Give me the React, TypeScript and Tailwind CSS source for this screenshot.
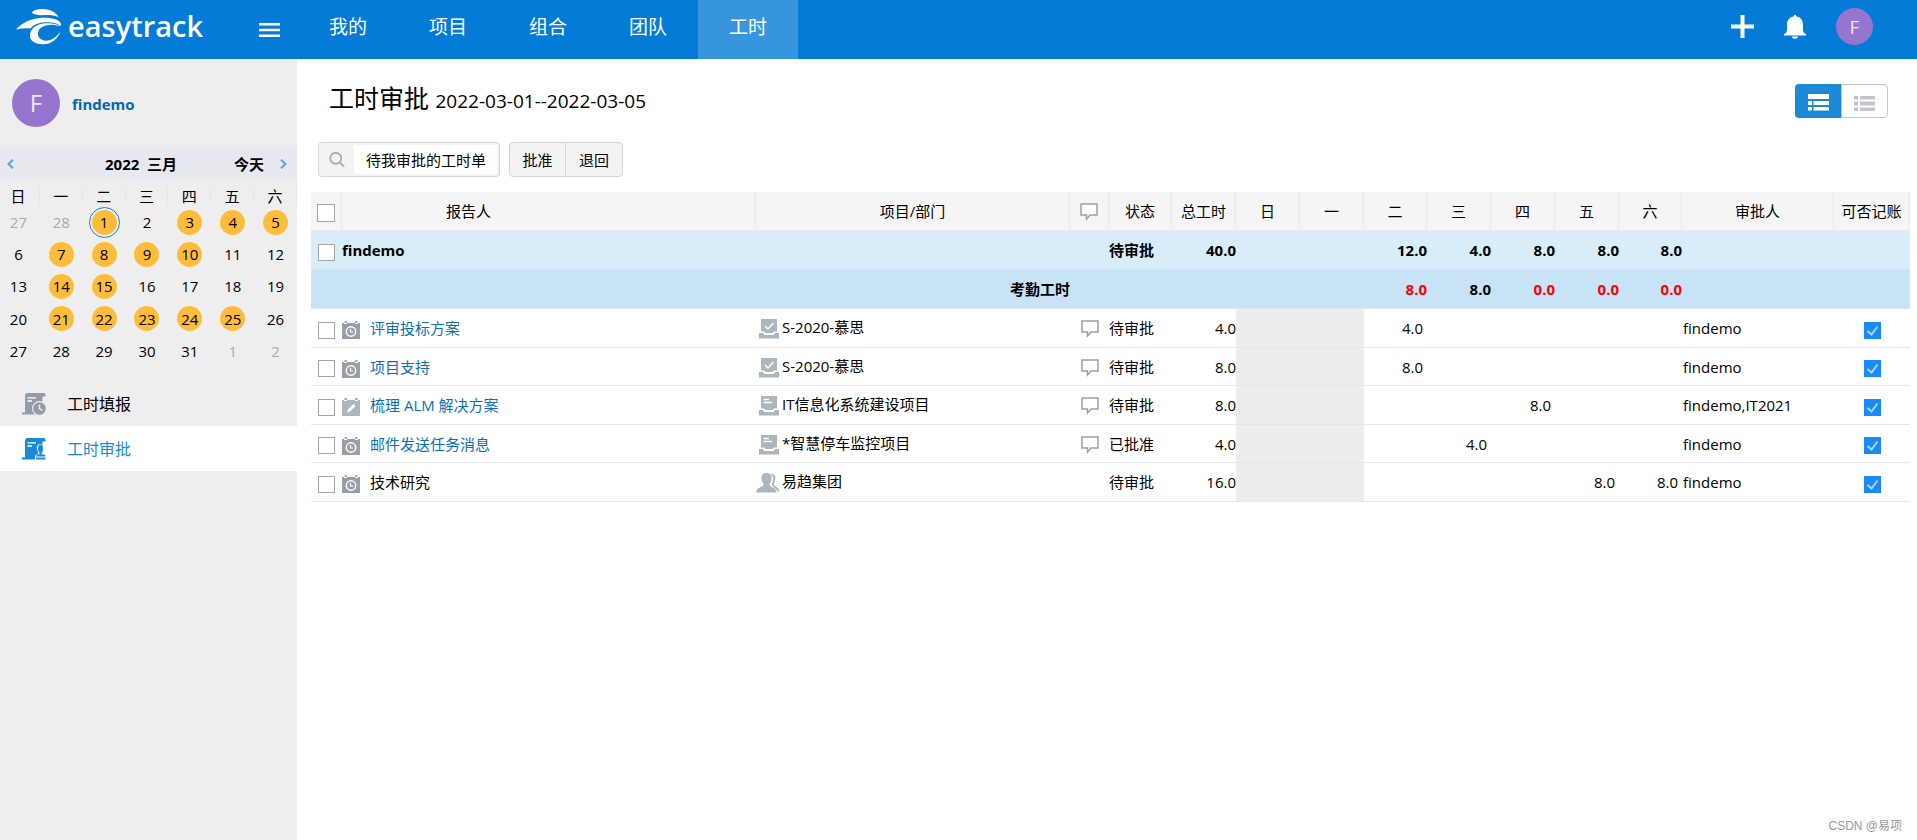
import React, { useState } from 'react';
import clsx from 'clsx';

type IconProps = { className?: string };

const Logo: React.FC = () => (
  <svg width="46" height="37" viewBox="0 0 46 37" fill="#fff" aria-hidden="true">
    <path d="M15.500 4.500 C19 1.500 22 .8 27 1 C34 1.200 40 4 42.500 9.200 C37 6.500 31 7 25 7.200 C21 7.200 18 6.500 15.500 4.500Z" />
    <path d="M0 21.500 C6 15 15 10.300 26 9.800 C36 9.400 44 11.500 45 16 C45.300 17.500 44.500 18 43.500 17.500 C41 15 35 14 29 14.300 C23 14.500 17 17 14.500 20.500 C10 20 5 20.300 0 21.500Z" />
    <path d="M43.500 18.500 C38 15.500 28 16.500 24 20.500 C20 25 22 31 28 32.500 C35 33.500 41 29 44.500 23 C42 31.500 35 36.500 26.500 36.300 C18 36 13 32 14 26.500 C15 20 21 15.500 30 15.300 C36 15 42 16 43.500 18.500Z" />
  </svg>
);

const TimesheetIcon: React.FC<IconProps & { stamp?: boolean }> = ({ className, stamp }) => (
  <svg width="24" height="22" viewBox="0 0 24 22" className={className} aria-hidden="true">
    <path d="M6 0H21.500C23.500 0 23.700 1.500 23.500 3.500H20.500V19H16V21.500H0V19.500H3V3C3 1 4 0 6 0Z" fill="currentColor" />
    <path d="M5.500 4.800H14M5.500 8H10" stroke="#fff" strokeWidth="1.300" />
    {stamp ? (
      <>
        <path d="M13 22V17.500L16.500 15.500L14.800 10C14.500 4.500 22 4.500 21.500 10L20 15.500L24 17.500V22Z" fill="#fff" />
        <ellipse cx="18.500" cy="10.500" rx="2.500" ry="4" fill="currentColor" />
        <path d="M17.300 13H19.700V16.500H17.300ZM14 18.500C14 17 15 16.500 16.500 16.500H21C22.500 16.500 23.500 17 23.500 18.500ZM14 19.500H23.500V21.500H14Z" fill="currentColor" />
      </>
    ) : (
      <>
        <circle cx="17.500" cy="15.500" r="7.500" fill="#eee" />
        <circle cx="17.500" cy="15.500" r="6.300" fill="currentColor" />
        <path d="M17.500 11.500V15.500L20.500 17.500" stroke="#eee" strokeWidth="1.500" fill="none" />
      </>
    )}
  </svg>
);

const TaskIcon: React.FC<{ kind: string }> = ({ kind }) => (
  <svg width="18" height="18" viewBox="0 0 18 18" className="shrink-0" aria-hidden="true">
    <path d="M0 2H2V3H5V2H13V3H16V2H18V18H0Z" fill={kind === 'edit' ? '#adb5bf' : '#989fab'} />
    <path d="M2.500 0H5V2H2.500ZM13 0H15.500V2H13Z" fill="#a5acb7" />
    {kind === 'edit' ? (
      <path d="M5 14.500L6 11.500L11.500 6L13.500 8L8 13.500Z" fill="#fff" />
    ) : (
      <>
        <circle cx="9" cy="10.500" r="4.700" fill="none" stroke="#fff" strokeWidth="1.500" />
        <path d="M8.500 8V11H11" stroke="#fff" strokeWidth="1.200" fill="none" />
      </>
    )}
  </svg>
);

const ProjectIcon: React.FC<{ kind: string }> = ({ kind }) => {
  if (kind === 'group') {
    return (
      <svg width="24" height="20" viewBox="0 0 24 20" fill="#adb5bd" aria-hidden="true">
        <path d="M14.500 0.800C18 .8 19.800 3 19.300 6.500C19 9 17.800 10 18 12C19 13.500 23 14 23.500 18.500H21.500C20.500 15.500 17.500 14.500 16 12.500C15.500 11 17 9 17 5.800C17 3.500 16 1.800 14.500 .8Z" />
        <path d="M10.500 0C14.500 0 16 2.500 15.500 6C15 9 13.500 10 13.500 12C14.500 14.500 20 14 20.500 19.500H0C.5 14 6.500 14.500 7.500 12C7.500 10 6 9 5.500 6C5 2.500 6.500 0 10.500 0Z" />
      </svg>
    );
  }
  return (
    <svg width="20" height="20" viewBox="0 0 20 20" fill="#adb5bd" aria-hidden="true">
      <path d="M2 0H18V12.500H15L13.500 14H6.500L5 12.500H2Z" />
      <path d="M0 14H4L5.500 16H14.500L16 14H20V19.500H0Z" />
      {kind === 'check' ? (
        <path d="M6 7L9 10L14.500 4" stroke="#fff" strokeWidth="1.500" fill="none" />
      ) : (
        <path d="M4.500 3.500H10M4.500 6.500H13" stroke="#fff" strokeWidth="1.300" />
      )}
    </svg>
  );
};

const CommentIcon: React.FC = () => (
  <svg width="18" height="18" viewBox="0 0 18 18" className="mx-auto" aria-hidden="true">
    <path d="M1 1H17V12H10L6.500 16V12H1Z" fill="#fff" stroke="#a0a0a0" strokeWidth="1.500" />
  </svg>
);

const PlainCheckbox: React.FC<{ label: string }> = ({ label }) => (
  <input type="checkbox" aria-label={label} className="block w-[17px] h-[17px] ml-[7px] mt-1 appearance-none bg-white border border-[#a6a6a6]" />
);

const navItems = ['我的', '项目', '组合', '团队', '工时'];
const weekDays = ['日', '一', '二', '三', '四', '五', '六'];
const calendarDays = [27, 28, ...Array.from({ length: 31 }, (_, i) => i + 1), 1, 2];
const reportedDays = [1, 3, 4, 5, 7, 8, 9, 10, 14, 15, 21, 22, 23, 24, 25];

const entries = [
  { name: '评审投标方案', icon: 'clock', link: true, project: 'S-2020-慕思', projectIcon: 'check', comment: true, status: '待审批', total: '4.0', days: ['', '', '4.0', '', '', '', ''], approver: 'findemo' },
  { name: '项目支持', icon: 'clock', link: true, project: 'S-2020-慕思', projectIcon: 'check', comment: true, status: '待审批', total: '8.0', days: ['', '', '8.0', '', '', '', ''], approver: 'findemo' },
  { name: '梳理 ALM 解决方案', icon: 'edit', link: true, project: 'IT信息化系统建设项目', projectIcon: 'list', comment: true, status: '待审批', total: '8.0', days: ['', '', '', '', '8.0', '', ''], approver: 'findemo,IT2021' },
  { name: '邮件发送任务消息', icon: 'clock', link: true, project: '*智慧停车监控项目', projectIcon: 'list', comment: true, status: '已批准', total: '4.0', days: ['', '', '', '4.0', '', '', ''], approver: 'findemo' },
  { name: '技术研究', icon: 'clock', link: false, project: '易趋集团', projectIcon: 'group', comment: false, status: '待审批', total: '16.0', days: ['', '', '', '', '', '8.0', '8.0'], approver: 'findemo' },
];

const Header: React.FC = () => (
  <header className="flex h-[59px] bg-[#047bd6] text-white">
    <div className="flex w-[298px] shrink-0 pl-4">
      <a href="#" className="flex items-start pt-2 gap-1.5">
        <Logo />
        <span className="text-[29px] leading-9 font-semibold">easytrack</span>
      </a>
      <button type="button" aria-label="菜单" className="ml-auto mr-[18px]">
        <svg width="21" height="14" viewBox="0 0 21 14" fill="#fff">
          <path d="M0 0H21V2.500H0ZM0 5.700H21V8.200H0ZM0 11.400H21V13.900H0Z" />
        </svg>
      </button>
    </div>
    <nav className="flex">
      {navItems.map((item) => (
        <a
          key={item}
          href="#"
          className={clsx('w-[100px] pt-[13px] text-center text-[19px] leading-7', item === '工时' && 'bg-[#3795de]')}
        >
          {item}
        </a>
      ))}
    </nav>
    <div className="ml-auto flex pt-2 pr-11">
      <button type="button" aria-label="新建" className="pb-3.5">
        <svg width="23" height="23" viewBox="0 0 23 23" fill="#fff">
          <path d="M9.500 0H13.500V9.500H23V13.500H13.500V23H9.500V13.500H0V9.500H9.500Z" />
        </svg>
      </button>
      <button type="button" aria-label="通知" className="ml-[30px] pb-3">
        <svg width="22" height="25" viewBox="0 0 22 25" fill="#fff">
          <path d="M10 0H12V1.300C17 2 19 5.500 19 10V15C19 17 20 18 22 19V20.500H0V19C2 18 3 17 3 15V10C3 5.500 5 2 10 1.300Z" />
          <path d="M8 21.500H14C14 24.500 8 24.500 8 21.500Z" />
        </svg>
      </button>
      <button type="button" aria-label="账户" className="ml-[30px] w-[37px] h-[37px] rounded-full bg-[#9575cd] text-[#ece6f6] text-[19px]">
        F
      </button>
    </div>
  </header>
);

const Calendar: React.FC = () => (
  <section>
    <div className="flex items-center h-[33px] bg-[#e8e9ee] pl-[7px] pr-[10px] font-bold">
      <button type="button" aria-label="上个月">
        <svg width="7" height="10" viewBox="0 0 7 10" fill="none" stroke="#4fa9dc" strokeWidth="2">
          <path d="M6 .7L1.500 5L6 9.300" />
        </svg>
      </button>
      <span className="ml-[91px] whitespace-pre">2022  三月</span>
      <button type="button" className="ml-auto">今天</button>
      <button type="button" aria-label="下个月" className="ml-4">
        <svg width="7" height="10" viewBox="0 0 7 10" fill="none" stroke="#4fa9dc" strokeWidth="2">
          <path d="M1 .7L5.500 5L1 9.300" />
        </svg>
      </button>
    </div>
    <div className="grid grid-cols-7 -ml-[3px] pt-1.5 pb-px text-center">
      {weekDays.map((day) => (
        <div key={day} className="h-[19px] leading-[21px] border-r border-[#e6e6f0]">{day}</div>
      ))}
    </div>
    <div className="grid grid-cols-7 grid-rows-5 h-[161px] -ml-[3px]">
      {calendarDays.map((day, index) => {
        const outside = index < 2 || index > 32;
        const reported = !outside && reportedDays.includes(day);
        const selected = index === 2;
        return (
          <button key={index} type="button" className="flex items-center justify-center">
            <span className={clsx('rounded-full', selected && 'border border-[#1583d8] p-0.5')}>
              <span
                className={clsx(
                  'flex items-center justify-center w-[25px] h-[25px] rounded-full',
                  reported && 'bg-[#ffbc3a]',
                  outside && 'text-[#aaa]'
                )}
              >
                {day}
              </span>
            </span>
          </button>
        );
      })}
    </div>
  </section>
);

const Sidebar: React.FC = () => (
  <aside className="w-[297px] shrink-0 bg-[#eee]">
    <div className="flex items-center h-[88px] pl-3 gap-3">
      <span className="flex items-center justify-center w-12 h-12 rounded-full bg-[#9575cd] text-[#ece6f6] text-2xl">F</span>
      <a href="#" className="font-bold text-[#0568b0] pt-0.5">findemo</a>
    </div>
    <Calendar />
    <nav className="pt-3.5 text-base">
      <a href="#" className="flex items-center h-[45px] pl-[22px] gap-[21px]">
        <TimesheetIcon className="text-[#959ca9]" />
        工时填报
      </a>
      <a href="#" className="flex items-center h-[45px] pl-[22px] gap-[21px] bg-white text-[#1a8ad6]">
        <TimesheetIcon className="text-[#1a8ad6]" stamp />
        工时审批
      </a>
    </nav>
  </aside>
);

const Toolbar: React.FC = () => (
  <div className="flex h-[35px] ml-[7px] mb-[15px] gap-[9px]">
    <label className="flex w-[182px] p-0.5 pl-0 border border-[#d6d6d6] rounded-sm bg-[#f3f3f3]">
      <span className="flex w-[35px] shrink-0 justify-center items-center">
        <svg width="16" height="16" viewBox="0 0 16 16" fill="none" stroke="#aaa" strokeWidth="1.700">
          <circle cx="6.800" cy="6.300" r="5.500" />
          <path d="M10.700 10.300L15 14.700" />
        </svg>
      </span>
      <input type="text" aria-label="筛选" defaultValue="待我审批的工时单" className="min-w-0 flex-1 bg-white pl-3 outline-none" />
    </label>
    <div className="flex border border-[#d6d6d6] rounded-sm bg-[#f3f3f3]">
      <button type="button" className="w-14 border-r border-[#d6d6d6]">批准</button>
      <button type="button" className="w-14">退回</button>
    </div>
  </div>
);

const TimesheetTable: React.FC = () => {
  const [billable, setBillable] = useState(entries.map(() => true));
  const toggle = (row: number) => setBillable(billable.map((value, i) => (i === row ? !value : value)));

  return (
    <table className="w-full table-fixed border-separate border-spacing-0 whitespace-nowrap">
      <colgroup>
        <col className="w-[31px]" />
        <col />
        <col className="w-[314px]" />
        <col className="w-[39px]" />
        <col className="w-[63px]" />
        <col className="w-16" />
        <col className="w-16" />
        <col className="w-16" />
        <col className="w-[63px]" />
        <col className="w-16" />
        <col className="w-16" />
        <col className="w-16" />
        <col className="w-[63px]" />
        <col className="w-[152px]" />
        <col className="w-[76px]" />
      </colgroup>
      <thead>
        <tr className="h-[39px] bg-[#f5f5f5] *:border-r *:border-b *:border-[#e8e8ee] *:font-normal">
          <th>
            <input type="checkbox" aria-label="全选" className="block w-[18px] h-[18px] ml-1.5 mt-1 appearance-none bg-white border border-[#a6a6a6]" />
          </th>
          <th className="pr-40">报告人</th>
          <th>项目/部门</th>
          <th className="pt-0.5"><CommentIcon /></th>
          <th>状态</th>
          <th>总工时</th>
          {weekDays.map((day) => (
            <th key={day}>{day}</th>
          ))}
          <th>审批人</th>
          <th>可否记账</th>
        </tr>
      </thead>
      <tbody>
        <tr className="h-[39px] bg-[#d7edf9] font-bold *:border-b *:border-[#d9e8f1]">
          <td><PlainCheckbox label="findemo" /></td>
          <td colSpan={3}>findemo</td>
          <td>待审批</td>
          <td className="text-right">40.0</td>
          {['', '', '12.0', '4.0', '8.0', '8.0', '8.0'].map((hours, i) => (
            <td key={i} className="text-right">{hours}</td>
          ))}
          <td></td>
          <td></td>
        </tr>
        <tr className="h-[39px] bg-[#c8e3f5] font-bold *:border-b *:border-[#e6e7ec]">
          <td colSpan={3} className="text-right">考勤工时</td>
          <td colSpan={3}></td>
          {['', '', '8.0', '8.0', '0.0', '0.0', '0.0'].map((hours, i) => (
            <td key={i} className={clsx('text-right', i !== 3 && 'text-[#f00]')}>{hours}</td>
          ))}
          <td></td>
          <td></td>
        </tr>
        {entries.map((entry, row) => (
          <tr key={entry.name} className="h-[39px] even:h-[38px] *:border-b *:border-[#e6e7ea]">
            <td><PlainCheckbox label={entry.name} /></td>
            <td>
              <span className="flex items-center gap-2.5">
                <span className="pt-1"><TaskIcon kind={entry.icon} /></span>
                {entry.link ? <a href="#" className="text-[#0c6fb4]">{entry.name}</a> : entry.name}
              </span>
            </td>
            <td>
              <span className="flex items-center gap-[3px] pb-0.5">
                <span className={clsx('flex justify-end shrink-0 pt-1', entry.projectIcon === 'group' ? 'w-[24px] -mr-px' : 'w-[23px]')}>
                  <ProjectIcon kind={entry.projectIcon} />
                </span>
                {entry.project}
              </span>
            </td>
            <td className="pt-0.5">{entry.comment && <CommentIcon />}</td>
            <td>{entry.status}</td>
            <td className="text-right">{entry.total}</td>
            {entry.days.map((hours, i) => (
              <td key={i} className={clsx('text-right pr-1', i < 2 && 'bg-[#ededed]')}>{hours}</td>
            ))}
            <td className="pl-px">{entry.approver}</td>
            <td>
              <span className="relative block w-[17px] h-[17px] mx-auto mt-1">
                <input
                  type="checkbox"
                  aria-label={`可否记账 ${entry.name}`}
                  checked={billable[row]}
                  onChange={() => toggle(row)}
                  className="peer block w-[17px] h-[17px] appearance-none border border-[#a6a6a6] checked:border-[#1a89fa] checked:bg-[#1a89fa]"
                />
                <svg width="17" height="17" viewBox="0 0 17 17" className="absolute inset-0 hidden peer-checked:block pointer-events-none" fill="none" stroke="#a9d5fb" strokeWidth="2">
                  <path d="M3.500 9L7.500 12.500L13.500 4.500" />
                </svg>
              </span>
            </td>
          </tr>
        ))}
      </tbody>
    </table>
  );
};

const App: React.FC = () => {
  return (
    <div className="min-h-screen flex flex-col bg-white text-black text-[15px] leading-5 font-['Open_Sans','Noto_Sans_CJK_SC',sans-serif]">
      <Header />
      <div className="flex flex-1">
        <Sidebar />
        <main className="flex flex-col flex-1 min-w-0 pl-3.5 pr-[7px]">
          <div className="flex justify-between h-[83px] pl-[18px] pr-[22px]">
            <h1 className="pt-[23px] text-[25px] leading-8">
              工时审批 <span className="text-[19px]">2022-03-01--2022-03-05</span>
            </h1>
            <div className="flex h-[34px] mt-[25px]">
              <button type="button" aria-label="分组视图" className="flex items-center justify-center w-[46px] pt-0.5 rounded-l-sm bg-[#1a8ad6]">
                <svg width="21" height="17" viewBox="0 0 21 17" fill="#fff">
                  <path d="M0 0H21V5H0ZM0 7H4V11H0ZM5.500 7H21V11H5.500ZM0 13H4V16.500H0ZM5.500 13H21V16.500H5.500Z" />
                </svg>
              </button>
              <button type="button" aria-label="列表视图" className="flex items-center justify-center w-[47px] pt-1 rounded-r-sm border border-[#c3c4ce]">
                <svg width="21" height="15" viewBox="0 0 21 15" fill="#c3c4ce">
                  <path d="M0 0H4V3.500H0ZM6 0H21V3.500H6ZM0 5.500H4V9.500H0ZM6 5.500H21V9.500H6ZM0 11.500H4V15H0ZM6 11.500H21V15H6Z" />
                </svg>
              </button>
            </div>
          </div>
          <Toolbar />
          <TimesheetTable />
          <footer className="mt-auto pr-2 pb-1.5 text-right text-xs leading-4 text-[#999] font-['Liberation_Sans','Noto_Sans_CJK_SC',sans-serif]">
            CSDN @易项
          </footer>
        </main>
      </div>
    </div>
  );
};

export default App;
